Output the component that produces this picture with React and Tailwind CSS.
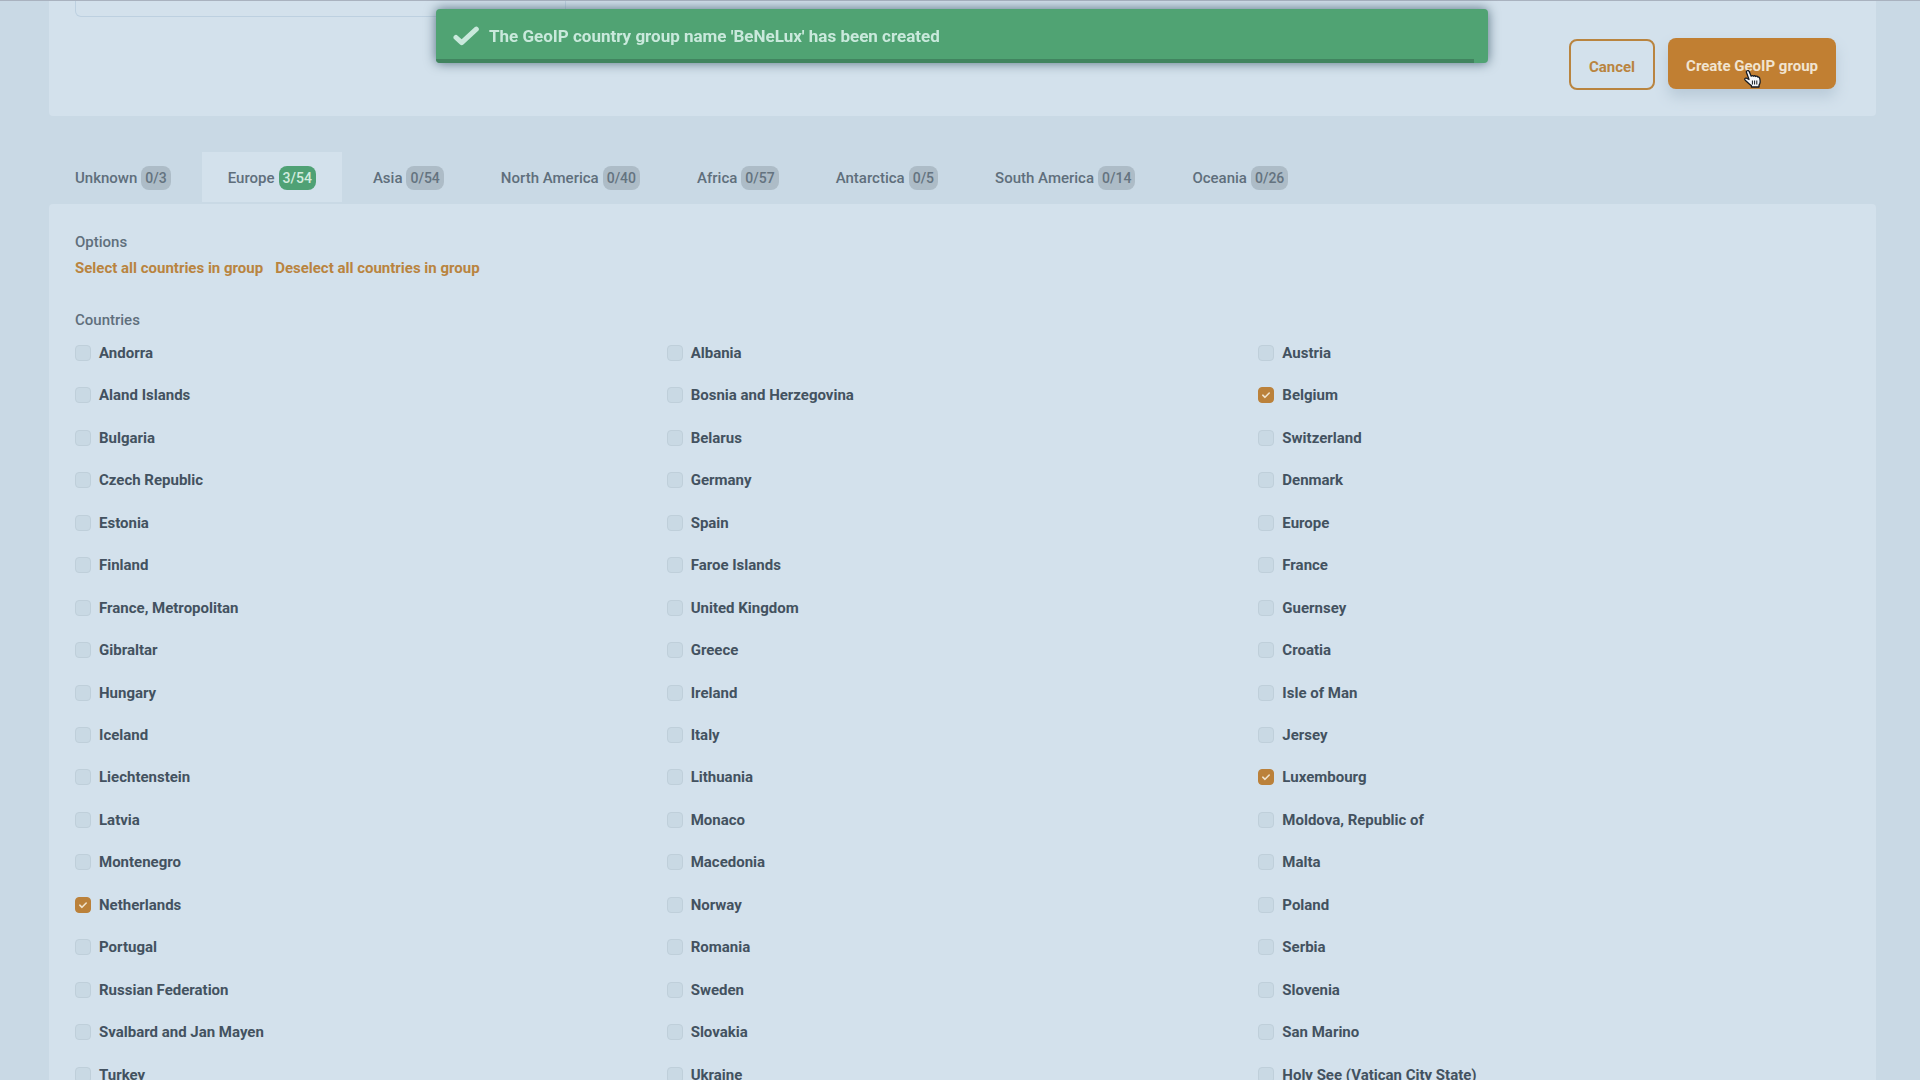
import { useState } from "react";

const TABS = [
  { name: "Unknown", total: 3 },
  { name: "Europe", total: 54 },
  { name: "Asia", total: 54 },
  { name: "North America", total: 40 },
  { name: "Africa", total: 57 },
  { name: "Antarctica", total: 5 },
  { name: "South America", total: 14 },
  { name: "Oceania", total: 26 },
];

const EUROPE = [
  "Andorra", "Albania", "Austria",
  "Aland Islands", "Bosnia and Herzegovina", "Belgium",
  "Bulgaria", "Belarus", "Switzerland",
  "Czech Republic", "Germany", "Denmark",
  "Estonia", "Spain", "Europe",
  "Finland", "Faroe Islands", "France",
  "France, Metropolitan", "United Kingdom", "Guernsey",
  "Gibraltar", "Greece", "Croatia",
  "Hungary", "Ireland", "Isle of Man",
  "Iceland", "Italy", "Jersey",
  "Liechtenstein", "Lithuania", "Luxembourg",
  "Latvia", "Monaco", "Moldova, Republic of",
  "Montenegro", "Macedonia", "Malta",
  "Netherlands", "Norway", "Poland",
  "Portugal", "Romania", "Serbia",
  "Russian Federation", "Sweden", "Slovenia",
  "Svalbard and Jan Mayen", "Slovakia", "San Marino",
  "Turkey", "Ukraine", "Holy See (Vatican City State)",
];

const Toast = ({ message }) => (
  <div className="fixed inset-x-0 top-[9px] flex justify-center pl-[49px] pr-[45px]">
    <div
      role="status"
      className="relative flex h-[54px] w-[1052px] items-center gap-2.5 overflow-hidden rounded bg-[#50a373] px-[17px] text-[#c9e9dc] shadow-[0_0_12px_#56707f]"
    >
      <svg
        viewBox="0 0 26 20"
        className="h-5 w-[26px]"
        fill="none"
        stroke="currentColor"
        strokeWidth="5"
        strokeLinecap="round"
        strokeLinejoin="round"
      >
        <path d="M3 11.500 8.700 16.600 23.300 3.200" />
      </svg>
      <span className="text-[17px] font-bold">{message}</span>
      <div className="absolute bottom-0 left-0 h-1 w-[98.7%] bg-[#41845f]" />
    </div>
  </div>
);

const Tab = ({ tab, count, active, onClick }) => (
  <button
    role="tab"
    aria-selected={active}
    onClick={onClick}
    className={`flex h-[50px] items-center gap-1 px-[26px] pt-0.5 ${
      active ? "bg-[#d3e1ec]" : ""
    }`}
  >
    {tab.name}
    <span
      className={`flex h-6 items-center rounded-lg px-1 text-sm ${
        count > 0 ? "bg-[#4fa175] text-[#d3ecdf]" : "bg-[#adbcc7] text-[#64737f]"
      }`}
    >
      {count}/{tab.total}
    </span>
  </button>
);

const CountryOption = ({ name, checked, onChange }) => (
  <label className="flex h-5 cursor-pointer items-center gap-2 font-bold text-[#435260]">
    <span className="grid">
      <input
        type="checkbox"
        checked={checked}
        onChange={onChange}
        className="peer col-start-1 row-start-1 size-4 appearance-none rounded border border-[#bfcfda] bg-[#c9d9e4] checked:border-[#bb813a] checked:bg-[#bb813a]"
      />
      <svg
        viewBox="0 0 16 16"
        className="pointer-events-none invisible col-start-1 row-start-1 size-4 peer-checked:visible"
        fill="none"
        stroke="#f0e2cc"
        strokeWidth="1.6"
        strokeLinecap="round"
        strokeLinejoin="round"
      >
        <path d="M4.8 8.2 7 10.3 11.2 6" />
      </svg>
    </span>
    {name}
  </label>
);

const HandCursor = () => (
  <svg
    viewBox="0 0 18 20"
    className="pointer-events-none absolute left-[76px] top-[31px] h-5 w-[18px]"
    fill="#f4f7fa"
    stroke="#151a20"
    strokeWidth="1.3"
    strokeLinejoin="round"
  >
    <path d="M3.1 1.8c.9-.6 1.800-.1 2.100.8l2 4.600c.4-.9 1.700-.9 2.200 0 .6-.7 1.800-.6 2.200.3.800-.7 1.900-.4 2.200.6.9-.3 1.700.2 1.900 1.200.5 1.900.7 3.700.1 5.300l-.8 1.700v1.700H7.400v-1.400C5.700 15.600 4.300 14 2.900 12.700c-.9-.8-1.900-1.400-2.200-2.300-.1-1 .9-1.600 1.900-1.200l2.400 1.300L2.500 3.500c-.3-.7-.1-1.300.6-1.700Z" />
    <path d="M8.400 11.500v4M10.600 11.500v4M12.800 11.500v4" strokeWidth="1" />
  </svg>
);

export default function App() {
  const [activeTab, setActiveTab] = useState("Europe");
  const [groupName, setGroupName] = useState("");
  const [selected, setSelected] = useState(["Belgium", "Luxembourg", "Netherlands"]);

  const toggle = (name) => {
    setSelected((prev) =>
      prev.includes(name) ? prev.filter((n) => n !== name) : [...prev, name]
    );
  };

  return (
    <div className="h-screen overflow-hidden border-t border-[#a9b2bf] bg-[#c9d9e5] pl-[49px] pr-[44px] font-['Roboto',sans-serif] text-[15px] leading-5 font-medium text-[#5f6f7c]">
      <section className="flex h-[115px] items-start justify-between rounded-b bg-[#d3e1ec] px-[26px]">
        <input
          aria-label="Group name"
          value={groupName}
          onChange={(e) => setGroupName(e.target.value)}
          className="h-4 w-[491px] rounded-b-md border border-t-0 border-[#bdd0e0] px-3"
        />
        <div className="flex items-center gap-[13px] pt-9 pr-3.5">
          <button className="mt-0.5 h-[51px] rounded-lg border-2 border-[#b9843f] px-[18px] pt-1 font-bold text-[#b9843f]">
            Cancel
          </button>
          <button className="relative h-[51px] rounded-lg bg-[#c17f32] px-[18px] pt-1 font-bold text-[#f1e4d0] shadow-[0_8px_14px_#b9cad8]">
            Create GeoIP group
            <HandCursor />
          </button>
        </div>
      </section>

      <div role="tablist" className="mt-9 mb-0.5 flex gap-[5px]">
        {TABS.map((tab) => (
          <Tab
            key={tab.name}
            tab={tab}
            count={tab.name === "Europe" ? selected.length : 0}
            active={activeTab === tab.name}
            onClick={() => setActiveTab(tab.name)}
          />
        ))}
      </div>

      <section className="rounded bg-[#d3e1ec] px-[26px] pt-7 pb-6">
        <h2>Options</h2>
        <div className="mt-1.5 flex gap-3 font-bold text-[#b9843f]">
          <a href="#select" onClick={() => setSelected(EUROPE)}>
            Select all countries in group
          </a>
          <a href="#deselect" onClick={() => setSelected([])}>
            Deselect all countries in group
          </a>
        </div>

        <h2 className="mt-8">Countries</h2>
        <div className="mt-[13px] grid min-h-[764px] grid-cols-3">
          {EUROPE.map((name) => (
            <CountryOption
              key={name}
              name={name}
              checked={selected.includes(name)}
              onChange={() => toggle(name)}
            />
          ))}
        </div>
      </section>

      <Toast message="The GeoIP country group name 'BeNeLux' has been created" />
    </div>
  );
}
